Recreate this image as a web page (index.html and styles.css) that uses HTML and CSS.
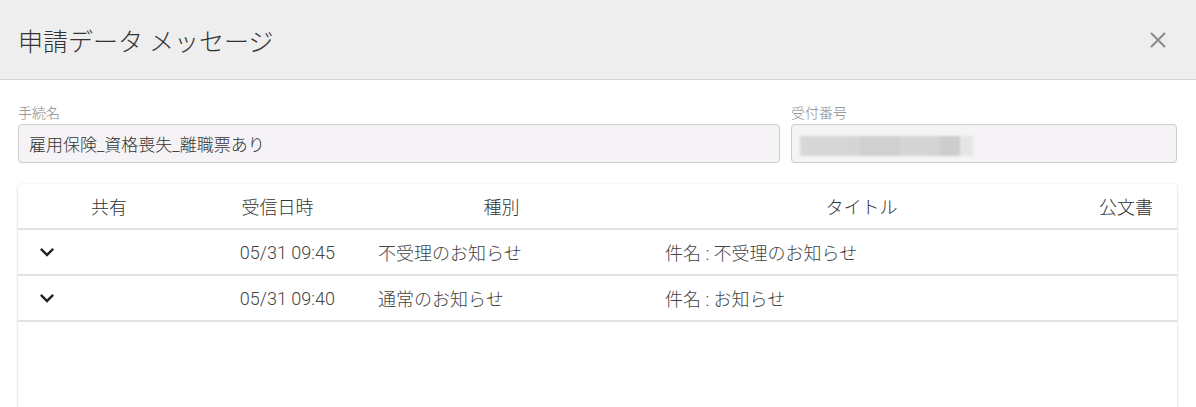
FILE: index.html
```html
<!DOCTYPE html>
<html lang="ja">
<head>
    <meta charset="UTF-8">
    <meta name="viewport" content="width=device-width, initial-scale=1.0">
    <title>申請データ メッセージ</title>
    <link rel="stylesheet" href="styles.css">
</head>
<body>

<!-- Dialog Header -->
<div class="dialog-header">
    <h1 class="dialog-title">申請データ メッセージ</h1>
    <button class="close-btn" aria-label="閉じる">
        <svg width="16" height="16" viewBox="0 0 16 16">
            <path d="M1 1L15 15M15 1L1 15" stroke="currentColor" stroke-width="2" fill="none"/>
        </svg>
    </button>
</div>

<!-- Dialog Body -->
<div class="dialog-body">
    <div class="fields">
        <div class="field">
            <label class="field-label">手続名</label>
            <div class="field-box">雇用保険_資格喪失_離職票あり</div>
        </div>
        <div class="field">
            <label class="field-label">受付番号</label>
            <div class="field-box">
                <span class="masked"></span>
            </div>
        </div>
    </div>

    <!-- Message Table -->
    <div class="table-card">
        <div class="table-row table-head">
            <div class="cell c-share">共有</div>
            <div class="cell c-date">受信日時</div>
            <div class="cell c-type">種別</div>
            <div class="cell c-title">タイトル</div>
            <div class="cell c-doc">公文書</div>
        </div>
        <div class="table-row">
            <div class="cell c-share">
                <svg class="chevron" width="28" height="28" viewBox="0 0 24 24"><path d="M16.59 8.59L12 13.17 7.41 8.59 6 10l6 6 6-6z"/></svg>
            </div>
            <div class="cell c-date">05/31 09:45</div>
            <div class="cell c-type">不受理のお知らせ</div>
            <div class="cell c-title">件名 : 不受理のお知らせ</div>
            <div class="cell c-doc"></div>
        </div>
        <div class="table-row">
            <div class="cell c-share">
                <svg class="chevron" width="28" height="28" viewBox="0 0 24 24"><path d="M16.59 8.59L12 13.17 7.41 8.59 6 10l6 6 6-6z"/></svg>
            </div>
            <div class="cell c-date">05/31 09:40</div>
            <div class="cell c-type">通常のお知らせ</div>
            <div class="cell c-title">件名 : お知らせ</div>
            <div class="cell c-doc"></div>
        </div>
    </div>
</div>

</body>
</html>
```

FILE: styles.css
```css
body {
    font-family: Roboto, "Noto Sans CJK JP", sans-serif;
    font-weight: 300;
    margin: 0;
    padding: 0;
    background: #fff;
    color: #333;
    overflow: hidden;
}

/* Header */
.dialog-header {
    height: 80px;
    box-sizing: border-box;
    background-color: #eeeeee;
    border-bottom: 1px solid #d4d4d4;
    display: flex;
    align-items: center;
    justify-content: space-between;
    padding: 0 30px 0 18px;
}

.dialog-title {
    margin: 0;
    font-size: 25px;
    font-weight: 300;
    color: #333;
}

.close-btn {
    background: none;
    border: none;
    padding: 0;
    color: #8a8a8a;
    display: flex;
    cursor: pointer;
    margin-top: 1px;
}

/* Body */
.dialog-body {
    padding: 24px 19px 0 18px;
}

.fields {
    display: grid;
    grid-template-columns: 762px 1fr;
    gap: 11px;
}

.field-label {
    display: block;
    font-size: 14px;
    line-height: 18px;
    color: #888;
    margin-bottom: 2px;
}

.field-box {
    height: 39px;
    box-sizing: border-box;
    border: 1px solid #cccccc;
    border-radius: 4px;
    background-color: #f5f3f5;
    padding: 0 10px;
    font-size: 17px;
    color: #333;
    display: flex;
    align-items: center;
}

.masked {
    display: block;
    width: 173px;
    height: 20px;
    margin: 4px 0 0 -2px;
    background: linear-gradient(90deg,
        #d9d8d9 0, #d6d5d6 60px, #d1d0d1 60px, #d1d0d1 100px,
        #d7d6d7 100px, #d5d4d5 140px, #cecdce 140px, #cecdce 160px,
        #e6e5e6 160px, #e6e5e6 173px);
    filter: blur(1px);
}

/* Table */
.table-card {
    margin-top: 21px;
    height: 260px;
    background: #fff;
    border-radius: 4px;
    box-shadow: 0 1px 3px rgba(0, 0, 0, 0.18), 0 0 2px rgba(0, 0, 0, 0.06);
}

.table-row {
    display: grid;
    grid-template-columns: 182px 155px 293px 427px 1fr;
    height: 46px;
    box-sizing: border-box;
    border-bottom: 2px solid #e2e2e2;
    align-items: center;
    font-size: 18px;
    color: #444;
}

.table-head {
    color: #333;
}

.table-head .cell {
    text-align: center;
    padding: 0;
}

.table-head .c-doc {
    text-align: right;
    padding-right: 24px;
}

.cell {
    white-space: nowrap;
}

.c-share {
    padding-left: 15px;
    display: flex;
    align-items: center;
}

.table-head .c-share {
    display: block;
}

.chevron {
    fill: #222;
}

.c-date {
    text-align: right;
    padding-right: 20px;
}

.c-type {
    padding-left: 23px;
}

.c-title {
    padding-left: 17px;
}
```
